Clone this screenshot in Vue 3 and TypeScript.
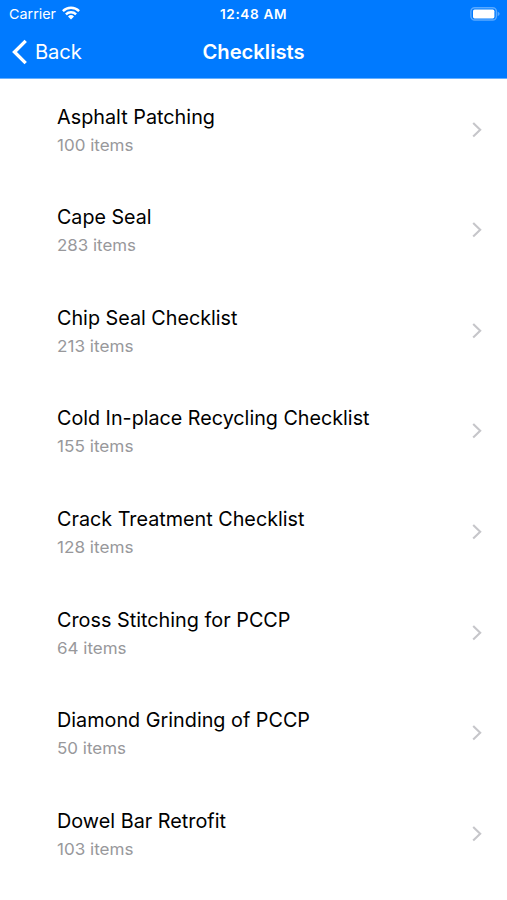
<script setup lang="ts">
interface Checklist { name: string; count: number; nameWidth: number; countWidth: number }

const lists: Checklist[] = [
  { name: 'Asphalt Patching', count: 100, nameWidth: 158, countWidth: 76.5 },
  { name: 'Cape Seal', count: 283, nameWidth: 94.5, countWidth: 79 },
  { name: 'Chip Seal Checklist', count: 213, nameWidth: 180.5, countWidth: 76.5 },
  { name: 'Cold In-place Recycling Checklist', count: 155, nameWidth: 312.5, countWidth: 76.5 },
  { name: 'Crack Treatment Checklist', count: 128, nameWidth: 247.5, countWidth: 76.5 },
  { name: 'Cross Stitching for PCCP', count: 64, nameWidth: 233.5, countWidth: 69.5 },
  { name: 'Diamond Grinding of PCCP', count: 50, nameWidth: 253, countWidth: 69 },
  { name: 'Dowel Bar Retrofit', count: 103, nameWidth: 169, countWidth: 76.5 },
]
</script>

<template>
  <div class="screen">
    <header class="top">
      <div class="status">
        <div class="carrier">
          <svg width="63" height="20" viewBox="0 0 63 20"><text x="9" y="15" textLength="47" lengthAdjust="spacingAndGlyphs" font-size="13.5">Carrier</text></svg>
          <svg class="wifi" width="18" height="14" viewBox="0 0 18 14"><g fill="none" stroke="#fff" stroke-width="2.4"><path d="M.9 5.1a11.6 11.6 0 0 1 16.2 0" /><path d="M3.9 8.3a7.2 7.2 0 0 1 10.2 0" /></g><path d="M9 13.4 6 10.4a4.3 4.3 0 0 1 6 0z" fill="#fff" /></svg>
        </div>
        <span class="time">12:48 AM</span>
        <svg class="battery" width="32" height="14" viewBox="0 0 32 14"><rect x=".9" y=".7" width="25.5" height="12.3" rx="3.8" fill="none" stroke="#59a9ff" stroke-width="1.4" /><rect x="3" y="2.6" width="21.4" height="8.8" rx="1.6" fill="#fff" /><path d="M27.7 4.6q4 2.3 0 4.6z" fill="#59a9ff" /></svg>
      </div>
      <nav class="nav">
        <div class="back">
          <svg width="17" height="26" viewBox="0 0 17 26"><path d="M14.7 1.9 3.5 13l11.2 11.1" fill="none" stroke="#fff" stroke-width="3.4" /></svg>
          <span>Back</span>
        </div>
        <h1>Checklists</h1>
      </nav>
    </header>
    <main class="list">
      <div v-for="item in lists" :key="item.name" class="row">
        <div class="copy">
          <svg class="name" width="330" height="30"><text x="0" y="20.6" :textLength="item.nameWidth" lengthAdjust="spacingAndGlyphs">{{ item.name }}</text></svg>
          <svg class="count" width="120" height="24"><text x="0" y="18.2" :textLength="item.countWidth" lengthAdjust="spacingAndGlyphs">{{ item.count }} items</text></svg>
        </div>
        <svg class="chevron" width="12" height="18" viewBox="0 0 12 18"><path d="m2.2 2 7 6.8-7 6.8" fill="none" stroke="#c6c6ca" stroke-width="2.1" /></svg>
      </div>
    </main>
  </div>
</template>

<style>
body { margin: 0; background: #fff; }
</style>

<style scoped>
.screen { height: 900px; overflow: hidden; background: #fff; font-family: Inter, "Liberation Sans", sans-serif; }
svg { display: block; flex: none; }
.top { height: 79px; box-sizing: border-box; border-bottom: 1px solid #66b0ff; background: #007aff; color: #fff; }
.status { height: 27px; display: grid; grid-template-columns: 1fr auto 1fr; align-items: center; }
.carrier { display: flex; align-items: center; }
.carrier text { fill: #fff; }
.wifi { margin: -2px 0 0 -1px; }
.time { font-size: 13.6px; font-weight: 600; letter-spacing: .62px; }
.battery { justify-self: end; margin-right: 5px; }
.nav { height: 49px; display: grid; grid-template-columns: 1fr auto 1fr; align-items: center; }
.back { display: flex; align-items: center; gap: 7px; padding-left: 11px; font-size: 20.2px; letter-spacing: -.15px; }
h1 { margin: 0; font-size: 20.2px; font-weight: 600; }
.list { padding-top: .5px; }
.row { height: 100.57px; display: flex; align-items: center; justify-content: space-between; padding: 0 24px 0 57px; box-sizing: border-box; }
.name text { font-size: 20.3px; fill: #000; }
.count text { font-size: 16.5px; fill: #98989b; }
</style>
